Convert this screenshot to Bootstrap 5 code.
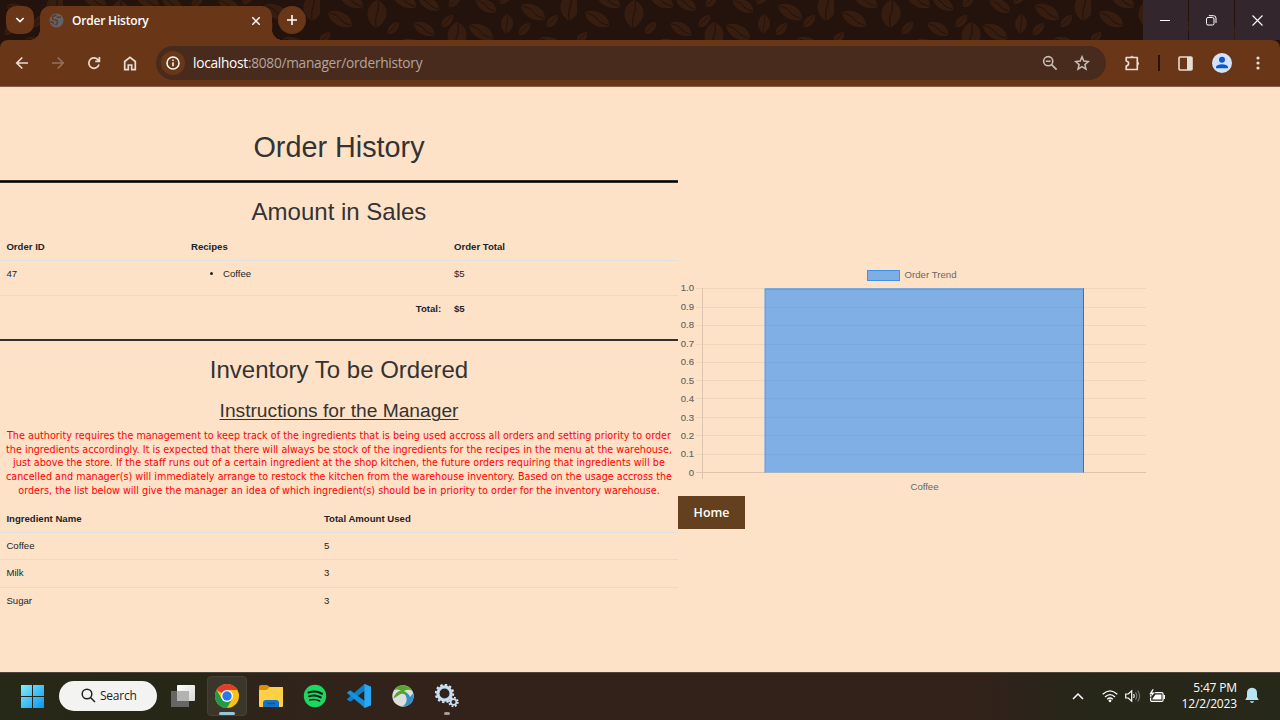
<!DOCTYPE html>
<html lang="en">
<head>
<meta charset="utf-8">
<meta name="viewport" content="width=device-width, initial-scale=1">
<title>Order History</title>
<link href="https://cdn.jsdelivr.net/npm/bootstrap@5.3.0/dist/css/bootstrap.min.css" rel="stylesheet">
<style>
body{width:1280px;height:720px;overflow:hidden;background:#fee2c8;font-family:"Liberation Sans",Arial,sans-serif;color:#212529}
svg{display:block;flex:none}
.ui{font-family:"Open Sans","Noto Sans",sans-serif}
/* browser window */
.tabstrip{height:40px;background:#24120c;position:relative}
.beans{position:absolute;left:0;top:0}
.tabsearch{width:28px;height:28px;border-radius:10px;background:#693617;margin:6px 6px 0 6px}
.tab{position:relative;width:232px;height:34px;margin-top:6px;background:#693617;border-radius:10px 10px 0 0;padding:0 10px 5px 9px;color:#fff}
.tab:before,.tab:after{content:"";position:absolute;bottom:0;width:10px;height:10px}
.tab:before{left:-10px;background:radial-gradient(circle at 0 0,transparent 9.6px,#693617 10px)}
.tab:after{right:-10px;background:radial-gradient(circle at 100% 0,transparent 9.6px,#693617 10px)}
.tab-title{font-size:12px;font-weight:600;letter-spacing:-.2px;margin-left:8px;line-height:30px;padding-top:1px;white-space:nowrap}
.newtab{width:28px;height:28px;border-radius:50%;background:#693617;margin:6px 0 0 6px}
.winbtn{width:45px;height:40px;background:#33262d;margin-right:1px;padding-right:1px}
.winbtn:last-child{margin-right:0}
.under{background:#24120c}
.toolbar{height:47px;background:#693617;border-radius:8px 8px 0 0;padding-left:4px;border-bottom:1px solid #8a6048}
.ic{width:36px;height:46px;display:flex;align-items:center;justify-content:center;flex:none}
.omni{width:950px;height:34px;border-radius:17px;background:#492b1d;margin-left:8px;padding-left:5px}
.info{width:24px;height:24px;border-radius:50%;background:#693617}
.url{font-size:13.7px;color:#b3a59d;margin-left:8px;white-space:nowrap;letter-spacing:-.27px;line-height:34px}
.url b{font-weight:400;color:#fff}
.vsep{width:2px;height:16px;background:#24120c;margin:0 8px}
/* page */
.page{height:585px}
.left{width:678px;text-align:center}
.left h1,.left h2,.left h4{color:#333;font-weight:400;margin:0}
.left h1{font-size:28.8px;line-height:40px;padding:40px 0 13px}
.left h2{font-size:24px;line-height:30px}
.left h4{font-size:19.2px;line-height:26px;text-decoration:underline;text-decoration-thickness:1px;text-underline-offset:2px}
.rule3{height:3px;background:#000;border-top:1px solid #33302d;border-bottom:1px solid #33302d}
.rule2{height:2px;background:#332f2e}
.grid{--bs-table-bg:transparent;table-layout:fixed;width:678px;border-collapse:separate;border-spacing:0;margin:0;text-align:left;font-size:9.6px;line-height:13.7px;color:#212529}
.grid>:not(caption)>*>*{padding:6.6px 6.4px 0;border-bottom:1px solid #e5dbd4;vertical-align:top;background:none}
.grid>tbody>tr>*{padding-top:5.8px}
.grid>tbody>tr>*{padding-top:5.8px!important}
.grid>thead>tr>th{border-color:#dee2e6}
.grid>tbody>tr:last-child>*{border-bottom:0}
.grid ul{padding-left:32px;margin:0}
.note{color:#f00;font-family:"DejaVu Sans",Verdana,sans-serif;font-size:9.6px;line-height:13.7px;white-space:nowrap;letter-spacing:.03px}
.right-col{padding-top:177px}
.home{width:67px;height:33px;border-radius:0;background:#64401f;color:#fff;font-weight:600;font-size:12.4px;line-height:32px;padding:0}
.home:hover{background:#64401f;color:#fff}
/* taskbar */
.taskbar{height:48px;color:#fff;padding-bottom:2px;border-top:1px solid #4a453c;background:linear-gradient(90deg,#262818 0,#272717 190px,#30241a 260px,#32221a 420px,#32221a 980px,#2b241a 1040px,#262718 1100px,#262818 100%)}
.ti{width:44px;height:45px;display:flex;align-items:center;justify-content:center;position:relative;flex:none}
.pill{width:98px;height:30px;border-radius:15px;background:#f3f3f1;color:#222;margin:0 4px;font-size:12px;letter-spacing:-.25px;padding-left:22px}
.active-app{width:40px;height:40px;border-radius:4px;background:#3a3629;border:1px solid #454134}
.dash{position:absolute;bottom:3px;height:3px;border-radius:2px}
.clock{font-size:12px;line-height:16px;text-align:right;white-space:nowrap;letter-spacing:-.15px}
</style>
</head>
<body>
<header class="ui">
  <div class="tabstrip d-flex">
    <svg class="beans" width="1280" height="40">
      <defs>
        <g id="b"><path d="M-12-5C-9-10 12-7 12 8C4 12-10 6-12-5Z" fill="#361d0f"/><path d="M-11-5Q-4-4 0 1T11 7" fill="none" stroke="#24120c" stroke-width="1.2"/></g>
        <g id="v"><path d="M0-14C13-8 13 6-1 14C-13 6-12-8 0-14Z" fill="#361d0f"/><path d="M1-13Q2-4 0 0T-1 14" fill="none" stroke="#24120c" stroke-width="1.3"/></g>
        <g id="s"><path d="M6-6C7 1 1 7-5 6C-7 0-1-6 6-6Z" fill="#361d0f"/><path d="M5-5L-5 5" stroke="#24120c" stroke-width=".8"/></g>
        <pattern id="beanp" x="63" y="0" width="257" height="40" patternUnits="userSpaceOnUse">
          <use href="#b" x="20" y="18"/><use href="#b" x="31" y="-1"/><use href="#v" x="57" y="14"/><use href="#s" x="73" y="28"/><use href="#s" x="4" y="38"/><use href="#b" x="84" y="-1"/>
          <use href="#b" transform="translate(104 28) scale(.87)"/><use href="#b" transform="translate(109 3) scale(.84)"/><use href="#s" x="127" y="21"/><use href="#s" x="134" y="1"/>
          <use href="#v" x="137" y="36"/><use href="#b" x="161" y="31"/><use href="#b" transform="translate(166 5) scale(.85)"/><use href="#s" x="185" y="-2"/>
          <use href="#v" transform="translate(187 24) scale(.62 .7)"/><use href="#s" x="204" y="29"/><use href="#b" x="213" y="11"/><use href="#s" x="232" y="21"/><use href="#b" x="232" y="44"/><use href="#b" x="94" y="46"/><use href="#v" x="250" y="7"/>
        </pattern>
      </defs>
      <rect width="1280" height="40" fill="url(#beanp)"/>
    </svg>
    <div class="tabsearch position-relative d-flex align-items-center justify-content-center"><svg width="10" height="6" fill="none" stroke="#fff" stroke-width="1.7"><path d="M1.3 1L5 4.6L8.7 1"/></svg></div>
    <div class="tab d-flex align-items-center">
      <svg width="15" height="15" viewBox="0 0 15 15"><circle cx="7.5" cy="7.5" r="7" fill="#5f6469"/><path d="M7.500 1.800L3.500 3.500L3.800 6.500L8 7.300L8.600 9.600L6.500 12.500M7.600 4.300H10.200L12 3.600M1.200 8.500L4.200 9.600L4.600 11.500" fill="none" stroke="#693617" stroke-width="1.400"/></svg>
      <span class="tab-title">Order History</span>
      <svg class="ms-auto" width="12" height="12" stroke="#fff" stroke-width="1.5"><path d="M2.3 2.3L9.7 9.7M9.7 2.3L2.3 9.7"/></svg>
    </div>
    <div class="newtab position-relative d-flex align-items-center justify-content-center"><svg width="12" height="12" stroke="#fff" stroke-width="1.6"><path d="M6 1V11M1 6H11"/></svg></div>
    <div class="d-flex ms-auto position-relative">
      <div class="winbtn d-flex align-items-center justify-content-center"><svg width="10" height="10"><path d="M0 5.5H10" stroke="#fff"/></svg></div>
      <div class="winbtn d-flex align-items-center justify-content-center"><svg width="11" height="11" fill="none" stroke="#fff"><rect x=".5" y="2.5" width="7.5" height="7.5" rx="1.5"/><path d="M2.8.7H7.5Q10 .7 10 3.2V8"/></svg></div>
      <div class="winbtn d-flex align-items-center justify-content-center"><svg width="11" height="11" stroke="#fff" stroke-width="1.1"><path d="M.5 .5L10.5 10.5M10.5 .5L.5 10.5"/></svg></div>
    </div>
  </div>
  <div class="under"><div class="toolbar d-flex align-items-center">
    <span class="ic"><svg width="14" height="14" fill="none" stroke="#e8dcd5" stroke-width="1.7"><path d="M13 7H2M7.3 1.5L1.8 7L7.3 12.5"/></svg></span>
    <span class="ic"><svg width="14" height="14" fill="none" stroke="#96705b" stroke-width="1.7"><path d="M1 7H12M6.7 1.5L12.2 7L6.7 12.5"/></svg></span>
    <span class="ic"><svg width="14" height="14" fill="none" stroke="#e8dcd5" stroke-width="1.700"><path d="M12 8.600A5.200 5.200 0 1 1 10.600 3.300L12.300 5M12.400 1V5.300H8.200"/></svg></span>
    <span class="ic"><svg width="14" height="15" fill="none" stroke="#e8dcd5" stroke-width="1.7"><path d="M1.7 13.7V5.500L7 1.3L12.3 5.500V13.7H8.7V9H5.3V13.7Z"/></svg></span>
    <div class="omni d-flex align-items-center">
      <span class="info d-flex align-items-center justify-content-center"><svg width="14" height="14"><circle cx="7" cy="7" r="6" fill="none" stroke="#fff" stroke-width="1.5"/><path d="M7 6.3V10.3M7 3.6V5.1" stroke="#fff" stroke-width="1.5"/></svg></span>
      <span class="url"><b>localhost</b>:8080/manager/orderhistory</span>
      <svg class="ms-auto" width="16" height="16" fill="none" stroke="#c9beb7" stroke-width="1.6"><circle cx="6.2" cy="6.2" r="4.6"/><path d="M9.6 9.6L14.6 14.6M3.8 6.2H8.6"/></svg>
      <svg style="margin:0 16px" width="16" height="16" fill="none" stroke="#c9beb7" stroke-width="1.5"><path d="M8 1.8L9.8 6.1L14.4 6.5L10.9 9.6L12 14.1L8 11.7L4 14.1L5.1 9.6L1.6 6.5L6.2 6.1Z"/></svg>
    </div>
    <span class="ic ms-2"><svg width="18" height="18" viewBox="0 0 18 18" fill="none" stroke="#e8dcd5" stroke-width="1.700" stroke-linejoin="round"><path d="M3.200 3.500H14.300V15.500H3.200V12Q5.600 11.600 5.600 9.500T3.200 7Z"/><path d="M7.300 2.800A1.900 1.900 0 0 1 10.700 2.800ZM15 7.800A1.900 1.900 0 0 1 15 11.200Z" fill="#e8dcd5" stroke="none"/></svg></span>
    <span class="vsep"></span>
    <span class="ic pe-1"><svg style="margin-left:2px" width="15" height="15"><rect x="1" y="1" width="13" height="13" rx="1" fill="none" stroke="#e8dcd5" stroke-width="1.6"/><path d="M9 1H14V14H9Z" fill="#e8dcd5"/></svg></span>
    <span class="ic"><svg width="20" height="20"><circle cx="10" cy="10" r="10" fill="#d3e3fd"/><circle cx="10" cy="6.8" r="3" fill="#0b57d0"/><path d="M4 15.2V13.7Q5 11.2 10 11.2T16 13.7V15.2Z" fill="#0b57d0"/></svg></span>
    <span class="ic"><svg width="4" height="16" fill="#e8dcd5"><circle cx="2" cy="3" r="1.6"/><circle cx="2" cy="8" r="1.6"/><circle cx="2" cy="13" r="1.6"/></svg></span>
  </div></div>
</header>

<main class="page d-flex">
  <section class="left">
    <h1>Order History</h1>
    <div class="rule3"></div>
    <h2 style="padding:14px 0 6px">Amount in Sales</h2>
    <table class="table grid">
      <colgroup><col style="width:184.6px"><col style="width:263px"><col></colgroup>
      <thead><tr style="height:28px"><th>Order ID</th><th>Recipes</th><th>Order Total</th></tr></thead>
      <tbody>
        <tr style="height:35px"><td>47</td><td><ul><li>Coffee</li></ul></td><td>$5</td></tr>
        <tr style="height:43px"><th colspan="2" class="text-end">Total:</th><th>$5</th></tr>
      </tbody>
    </table>
    <div class="rule2"></div>
    <h2 style="padding:14px 0 13px">Inventory To be Ordered</h2>
    <h4>Instructions for the Manager</h4>
    <div class="note" style="padding:5px 0 7.5px">The authority requires the management to keep track of the ingredients that is being used accross all orders and setting priority to order<br>the ingredients accordingly. It is expected that there will always be stock of the ingredients for the recipes in the menu at the warehouse,<br>just above the store. If the staff runs out of a certain ingredient at the shop kitchen, the future orders requiring that ingredients will be<br>cancelled and manager(s) will immediately arrange to restock the kitchen from the warehouse inventory. Based on the usage accross the<br>orders, the list below will give the manager an idea of which ingredient(s) should be in priority to order for the inventory warehouse.</div>
    <table class="table grid">
      <colgroup><col style="width:317.5px"><col></colgroup>
      <thead><tr style="height:28px"><th>Ingredient Name</th><th>Total Amount Used</th></tr></thead>
      <tbody>
        <tr style="height:27px"><td>Coffee</td><td>5</td></tr>
        <tr style="height:28px"><td class="pt-more">Milk</td><td>3</td></tr>
        <tr style="height:27px"><td>Sugar</td><td>3</td></tr>
      </tbody>
    </table>
  </section>
  <section class="right-col">
    <svg width="472" height="232" viewBox="678 264 472 232" font-family="Liberation Sans, Arial, sans-serif" font-size="9.6" fill="#666">
      <path d="M696 288.5H1146M696 307.5H1146M696 325.5H1146M696 344.5H1146M696 362.5H1146M696 380.5H1146M696 398.5H1146M696 417.5H1146M696 435.5H1146M696 454.5H1146" stroke="#f0d5bd"/>
      <path d="M702.5 288V479M696 472.5H1146" stroke="#dcc4ae"/>
      <rect x="765" y="288.500" width="319" height="184" fill="#007bff" fill-opacity=".5"/>
      <path d="M765 472.500V289" stroke="#4c9bef"/><path d="M764.500 289H1084" stroke="#4393ee"/><path d="M1083.500 288.500V472.500" stroke="#147ce6"/>
      <rect x="867.500" y="270.500" width="32" height="10" fill="#80aee3" stroke="#3b92ef"/>
      <text x="904.500" y="278.300" textLength="52">Order Trend</text>
      <text x="924.500" y="490" text-anchor="middle">Coffee</text>
      <g text-anchor="end" stroke="#666" stroke-width=".15">
        <text x="694" y="291.400">1.0</text><text x="694" y="310">0.9</text><text x="694" y="328.300">0.8</text><text x="694" y="346.800">0.7</text><text x="694" y="365">0.6</text><text x="694" y="383.600">0.5</text><text x="694" y="402">0.4</text><text x="694" y="420.500">0.3</text><text x="694" y="438.800">0.2</text><text x="694" y="457.400">0.1</text><text x="694" y="476">0</text>
      </g>
    </svg>
    <a class="btn home ui d-block" href="#">Home</a>
  </section>
</main>

<footer class="taskbar ui d-flex align-items-center">
  <span class="ti" style="margin-left:10px;margin-right:1px"><svg width="24" height="24"><defs><linearGradient id="w" x1="0" y1="0" x2="24" y2="24" gradientUnits="userSpaceOnUse"><stop stop-color="#8af0fc"/><stop offset="1" stop-color="#0795f0"/></linearGradient></defs><path d="M1 1H12V12H1ZM13 1H24V12H13ZM1 13H12V24H1ZM13 13H24V24H13Z" fill="url(#w)"/></svg></span>
  <div class="pill d-flex align-items-center"><svg class="me-1" width="15" height="15" fill="none" stroke="#222" stroke-width="1.5"><circle cx="6" cy="6" r="4.800"/><path d="M9.500 9.500L14 14"/></svg>Search</div>
  <span class="ti"><svg width="24" height="24"><defs><linearGradient id="tv" x1="0" y1="0" x2="1" y2="1"><stop stop-color="#fff"/><stop offset="1" stop-color="#d6d6d6"/></linearGradient></defs><rect y="7" width="18" height="16" fill="#666"/><rect x="6" y="1" width="18" height="16" rx="1" fill="url(#tv)"/><rect x="6" y="7" width="12" height="10" fill="#b3b3b3"/></svg></span>
  <span class="ti"><span class="active-app d-flex align-items-center justify-content-center"><svg width="24" height="24"><circle cx="12" cy="12" r="12" fill="#fbc116"/><path d="M12 12L1.600 6A12 12 0 0 1 22.400 6H12Z" fill="#e33b2e"/><path d="M1.600 6A12 12 0 0 0 12 24L17.200 15L12 12L6.800 15Z" fill="#229a49"/><circle cx="12" cy="12" r="6" fill="#fff"/><circle cx="12" cy="12" r="4.700" fill="#2879ee"/></svg></span><i class="dash" style="width:16px;background:#9bc5de"></i></span>
  <span class="ti"><svg width="24" height="22"><path d="M0 2Q0 0 2 0H8L11 2H24V6H0Z" fill="#d99109"/><path d="M0 5H8L10.500 2H23Q24 2 24 3V21Q24 22 23 22H1Q0 22 0 21Z" fill="#ffcf45"/><path d="M4 22V18Q4 15 7 15H17Q20 15 20 18V22Z" fill="#1473c5"/><path d="M8 18.500H16" stroke="#105898" stroke-width="1.500"/></svg></span>
  <span class="ti"><svg width="24" height="24" fill="none" stroke="#191e18" stroke-linecap="round"><circle cx="12" cy="12" r="11.200" fill="#1ed760" stroke="none"/><path d="M5.500 8.500Q13 6 19 9.700" stroke-width="2.200"/><path d="M6 12.300Q12.500 10.300 17.800 13.400" stroke-width="1.900"/><path d="M6.700 15.900Q12.300 14.500 16.600 17" stroke-width="1.500"/></svg></span>
  <span class="ti"><svg width="24" height="24"><path d="M17.500 0L24 2.800V21.200L17.500 24V6.700L3.500 17.800L.3 16Q-.3 15.200.6 14.400Z" fill="#0f7fc7"/><path d="M.5 8L3.300 6.200L18 17.300V24L.6 9.600Q-.2 8.700.5 8Z" fill="#1590df"/><path d="M17.500 0L24 2.800V21.200L17.500 24Z" fill="#29a7f3"/></svg></span>
  <span class="ti"><svg width="22" height="22"><circle cx="11" cy="11" r="10.700" fill="#dcdfde"/><path d="M2 5Q6 0 11 .3Q18 1 20.500 6Q16 3.500 12 6Q17 8 16.500 12Q11 6.500 7 10L1.500 13.500Q3 7 9 5.500Q5 4 2 5Z" fill="#56a62c"/><path d="M12 8Q17 8 18 12L21 8.500Q23 15 17 20L10 22Q15.500 18 14.500 13Q14 10 12 8Z" fill="#3490c5"/></svg></span>
  <span class="ti"><svg width="24" height="24" fill="none"><circle cx="9.500" cy="9.500" r="8.700" stroke="#d9e9f7" stroke-width="2" stroke-dasharray="2.400 2.155"/><circle cx="9.500" cy="9.500" r="6.600" stroke="#c6def4" stroke-width="3.200"/><circle cx="18.500" cy="18" r="4.400" stroke="#d9e9f7" stroke-width="1.600" stroke-dasharray="1.800 1.650"/><circle cx="18.500" cy="18" r="2.900" stroke="#c6def4" stroke-width="1.800"/></svg><i class="dash" style="width:6px;background:#a09b96"></i></span>
  <div class="d-flex align-items-center ms-auto">
    <svg style="margin-right:18px" width="12" height="8" fill="none" stroke="#fff" stroke-width="1.500"><path d="M1 7L6 2L11 7"/></svg>
    <svg style="margin-right:7px" width="16" height="14" fill="none" stroke="#fff" stroke-width="1.300"><path d="M.7 5.300Q8-1.500 15.300 5.300M3 7.900Q8 3.300 13 7.900M5.200 10.300Q8 7.800 10.800 10.300"/><circle cx="8" cy="11.800" r="1.400" fill="#fff" stroke="none"/></svg>
    <svg style="margin-right:8px" width="16" height="14" fill="none" stroke="#fff" stroke-width="1.200"><path d="M.7 5H3.300L6.700 1.800V12.200L3.300 9H.7Z"/><path d="M8.600 5Q10 7 8.600 9"/><path d="M10.500 3.200Q13 7 10.500 10.800M12.700 1.500Q16.500 7 12.700 12.500" stroke="#77766b"/></svg>
    <svg style="margin-right:16px" width="17" height="14" viewBox="0 0 17 14"><rect x="1.600" y="3.600" width="12.500" height="8.800" rx="1.500" fill="none" stroke="#fff" stroke-width="1.200"/><path d="M6.500 5.500H12.500V10.500H3.500V9.500ZM14.500 6H16V10H14.500Z" fill="#fff"/><path d="M3.500-.3L0 5.500H2.500L1.500 9L6 3.500H3.500L5 0Z" fill="#fff" stroke="#262818" stroke-width=".5"/></svg>
    <div class="clock">5:47 PM<br>12/2/2023</div>
    <svg style="margin:0 21px 0 8px" width="14" height="17" fill="#b9e5f2"><path d="M7 .8Q12 1 12 6V9.700L13.700 13H.3L2 9.700V6Q2 1 7 .8ZM4.800 14.200H9.200Q8.500 16 7 16T4.800 14.200Z"/></svg>
  </div>
</footer>
<script src="https://cdn.jsdelivr.net/npm/bootstrap@5.3.0/dist/js/bootstrap.bundle.min.js"></script>
</body>
</html>
